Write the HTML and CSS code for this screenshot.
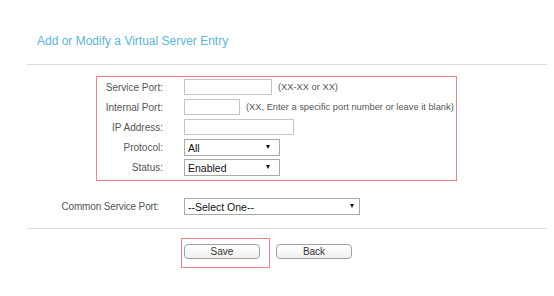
FILE: index.html
```html
<!DOCTYPE html>
<html lang="en">
<head>
    <meta charset="UTF-8">
    <meta name="viewport" content="width=device-width, initial-scale=1.0">
    <title>Virtual Server Entry</title>
    <link rel="stylesheet" href="styles.css">
</head>
<body>
    <h2 class="title">Add or Modify a Virtual Server Entry</h2>
    <div class="rule"></div>

    <!-- Highlighted entry fields -->
    <div class="entry-box">
        <label class="field-label" for="servicePort">Service Port:</label>
        <div class="field">
            <input type="text" id="servicePort" class="txt txt-port">
            <span class="hint">(XX-XX or XX)</span>
        </div>

        <label class="field-label" for="internalPort">Internal Port:</label>
        <div class="field">
            <input type="text" id="internalPort" class="txt txt-short">
            <span class="hint">(XX, Enter a specific port number or leave it blank)</span>
        </div>

        <label class="field-label" for="ipAddress">IP Address:</label>
        <div class="field">
            <input type="text" id="ipAddress" class="txt txt-ip">
        </div>

        <label class="field-label" for="protocol">Protocol:</label>
        <div class="field">
            <span class="select-wrap small">
                <select id="protocol" class="sel">
                    <option>All</option>
                    <option>TCP</option>
                    <option>UDP</option>
                </select>
            </span>
        </div>

        <label class="field-label" for="status">Status:</label>
        <div class="field">
            <span class="select-wrap small">
                <select id="status" class="sel">
                    <option>Enabled</option>
                    <option>Disabled</option>
                </select>
            </span>
        </div>
    </div>

    <div class="common-row">
        <label class="common-label" for="commonPort">Common Service Port:</label>
        <span class="select-wrap wide">
            <select id="commonPort" class="sel">
                <option>--Select One--</option>
                <option>DNS</option>
                <option>FTP</option>
                <option>HTTP</option>
            </select>
        </span>
    </div>

    <div class="rule rule-bottom"></div>

    <div class="actions">
        <span class="save-mark">
            <button type="button" class="btn">Save</button>
        </span>
        <button type="button" class="btn">Back</button>
    </div>
</body>
</html>
```

FILE: styles.css
```css
body {
    font-family: "Liberation Sans", Arial, sans-serif;
    margin: 0;
    background: #fff;
    color: #555;
}
.title {
    font-size: 12px;
    font-weight: normal;
    line-height: 14px;
    color: #5db4d5;
    margin: 34px 0 16px 37px;
}
.rule {
    height: 1px;
    background-color: #dcdcdc;
    margin: 0 7px 0 27px;
}
.entry-box {
    box-sizing: border-box;
    width: 361px;
    height: 105px;
    margin: 11px 0 0 96px;
    border: 1px solid #e8838a;
    display: grid;
    grid-template-columns: 66px 1fr;
    grid-auto-rows: 20px;
    column-gap: 21px;
    align-items: center;
}
.field-label {
    font-size: 10px;
    text-align: right;
}
.field {
    display: flex;
    align-items: center;
}
.txt {
    box-sizing: border-box;
    height: 16px;
    border: 1px solid #c6c6c6;
    padding: 0 2px;
    margin: 0;
    font-size: 10px;
}
.txt-port {
    width: 88px;
}
.txt-short {
    width: 56px;
}
.txt-ip {
    width: 110px;
}
.hint {
    font-size: 9.3px;
    margin-left: 6px;
    white-space: nowrap;
}
.select-wrap {
    position: relative;
    display: inline-block;
}
.select-wrap::after {
    content: "";
    position: absolute;
    top: 7px;
    right: 10px;
    border-left: 2.5px solid transparent;
    border-right: 2.5px solid transparent;
    border-top: 4px solid #111;
    pointer-events: none;
}
.select-wrap.wide::after {
    right: 6px;
}
.sel {
    -webkit-appearance: none;
    appearance: none;
    box-sizing: border-box;
    height: 17px;
    border: 1px solid #a9a9a9;
    border-radius: 0;
    background: #fff;
    padding: 0 0 0 3px;
    margin: 0;
    font-family: "Liberation Sans", Arial, sans-serif;
    font-size: 10.5px;
    color: #111;
}
.small .sel {
    width: 96px;
}
.wide .sel {
    width: 176px;
}
.common-row {
    display: flex;
    align-items: center;
    height: 20px;
    margin-top: 15px;
}
.common-label {
    width: 159px;
    text-align: right;
    font-size: 10px;
    letter-spacing: -0.15px;
    margin-right: 25px;
}
.rule-bottom {
    margin-top: 12px;
}
.actions {
    display: flex;
    align-items: flex-start;
    margin: 9px 0 0 181px;
}
.save-mark {
    display: flex;
    border: 1px solid #e8838a;
    padding: 5px 9px 8px 2px;
    margin-right: 6px;
}
.btn {
    box-sizing: border-box;
    width: 76px;
    height: 15px;
    padding: 0;
    border: 1px solid #a0a0a0;
    border-radius: 4px;
    background: linear-gradient(#ffffff, #f0f0f0);
    font-family: "Liberation Sans", Arial, sans-serif;
    font-size: 10px;
    color: #333;
    line-height: 13px;
    cursor: pointer;
}
.actions > .btn {
    margin-top: 6px;
}
```
